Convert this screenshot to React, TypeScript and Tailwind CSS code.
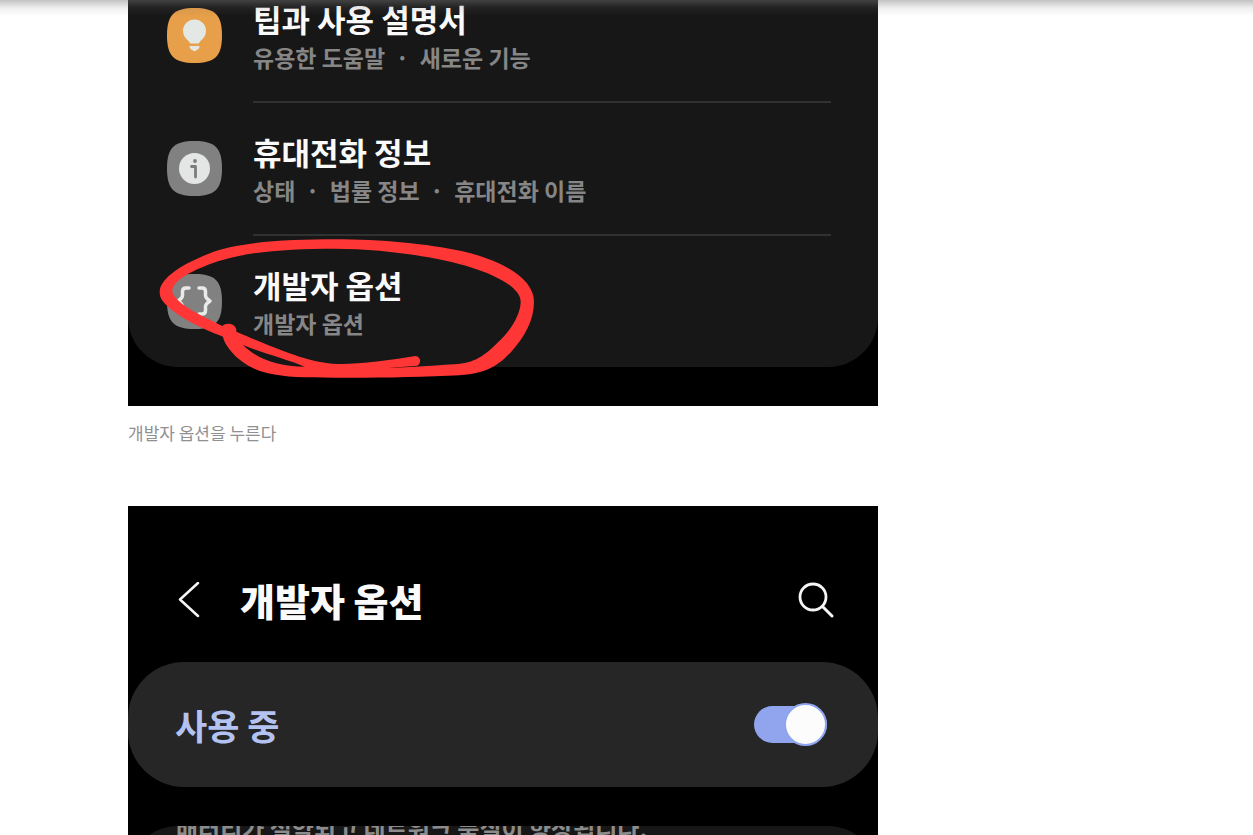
import { useState } from 'react';
import type { ReactNode } from 'react';

function IconTile({ color, children }: { color: string; children: ReactNode }) {
    return (
        <svg className="mt-[7px] size-[55px] shrink-0" viewBox="0 0 55 55" fill="none" aria-hidden="true">
            <path d="M27.5 0C48 0 55 7 55 27.5S48 55 27.5 55 0 48 0 27.5 7 0 27.5 0Z" fill={color} />
            {children}
        </svg>
    );
}

const menuItems = [
    {
        title: '팁과 사용 설명서',
        description: '유용한 도움말  ·  새로운 기능',
        icon: (
            <IconTile color="#e79f49">
                <path d="M27.5 11.5A11.5 11.5 0 0 0 16 23c0 4 2 7 5 9.500 1.500 1.200 1.500 3 3 3h7c1.500 0 1.500-1.800 3-3 3-2.500 5-5.500 5-9.500a11.500 11.500 0 0 0-11.500-11.500Z" fill="#e4e8e4" />
                <path d="M22.500 38h10c0 2-1 3.500-3 4-1 1.700-3 1.700-4 0-2-.5-3-2-3-4Z" fill="#e4e8e4" />
            </IconTile>
        ),
    },
    {
        title: '휴대전화 정보',
        description: '상태  ·  법률 정보  ·  휴대전화 이름',
        icon: (
            <IconTile color="#818181">
                <circle cx="27.5" cy="27.5" r="15.5" fill="#e4e6e5" />
                <circle cx="28" cy="20" r="1.900" fill="#7c7c7c" />
                <path d="M24.500 25.500h4V36" stroke="#7c7c7c" strokeWidth="2.800" strokeLinecap="round" strokeLinejoin="round" />
            </IconTile>
        ),
    },
    {
        title: '개발자 옵션',
        description: '개발자 옵션',
        icon: (
            <IconTile color="#818181">
                <path d="M22 14h-3c-2.500 0-3.500 1-3.500 3.500v4c0 2-1.500 3.500-4.500 5.500 3 2 4.500 3.500 4.500 5.500v4c0 2.500 1 3.500 3.500 3.500h3M32 14h3c2.500 0 3.500 1 3.500 3.500v4c0 2 1.500 3.500 4.500 5.500-3 2-4.500 3.500-4.500 5.500v4c0 2.500-1 3.500-3.500 3.500h-3" stroke="#e8ebe8" strokeWidth="3.500" strokeLinecap="round" strokeLinejoin="round" />
            </IconTile>
        ),
    },
];

function MarkerCircle() {
    return (
        <svg className="pointer-events-none absolute bottom-[26px] left-0 h-[150px] w-[420px]" viewBox="0 0 1260 450" aria-hidden="true">
            <path
                fill="#ff3636"
                fillRule="evenodd"
                d="M95 185C98 140 170 100 240 72C330 35 480 28 620 28C760 28 900 42 1000 63C1120 90 1218 145 1218 215C1218 270 1190 320 1150 365C1105 415 1060 437 960 437C850 442 740 443 620 443C530 443 470 442 420 430C340 412 290 350 285 320C220 296 150 260 115 225C100 210 95 200 95 185Z
                M133 185C131 150 200 118 270 94C360 65 480 56 620 56C760 56 900 78 990 101C1090 126 1178 170 1178 215C1178 255 1145 305 1110 337C1070 377 1040 400 980 403C900 408 840 412 780 414L868 407C880 400 880 380 862 378C790 390 700 402 640 402C560 402 480 372 325 305C328 280 295 275 283 288C230 260 145 225 133 185Z
                M345 345C400 368 480 388 530 410C450 410 385 385 345 345Z"
            />
        </svg>
    );
}

function SettingsMenu() {
    return (
        <div className="relative bg-black pb-[39px]">
            <ul className="rounded-b-[50px] bg-[#171717] pt-px pr-[47px] pl-[39px]">
                {menuItems.map((item) => (
                    <li key={item.title} className="group pt-[31px] first:pt-0">
                        <button type="button" className="flex w-full items-start gap-[31px] text-left">
                            {item.icon}
                            <span className="flex flex-1 flex-col border-b-2 border-[#303232] pb-6 group-last:border-b-0">
                                <span className="text-[31px] leading-9 font-bold text-[#fafafa]">{item.title}</span>
                                <span className="text-[23px] leading-10 font-bold whitespace-pre text-[#868686]">{item.description}</span>
                            </span>
                        </button>
                    </li>
                ))}
            </ul>
            <MarkerCircle />
        </div>
    );
}

function DeveloperOptions() {
    const [enabled, setEnabled] = useState(true);

    return (
        <div className="bg-black pt-16">
            <header className="flex h-[92px] items-start pt-2 pr-11 pl-[50px]">
                <button type="button" aria-label="뒤로" className="mt-1 flex h-9 w-[62px] items-center">
                    <svg className="h-9 w-6" viewBox="0 0 24 36" fill="none" aria-hidden="true">
                        <path d="M20 1 2 17.500 20 34" stroke="#f5f5f5" strokeWidth="2.500" strokeLinecap="round" strokeLinejoin="round" />
                    </svg>
                </button>
                <h2 className="flex-1 text-[38px] leading-11 font-black text-[#fafafa]">개발자 옵션</h2>
                <button type="button" aria-label="검색" className="mt-1">
                    <svg className="size-9" viewBox="0 0 36 36" fill="none" aria-hidden="true">
                        <circle cx="15" cy="15" r="13" stroke="#f5f5f5" strokeWidth="2.800" />
                        <path d="m25 25 9 9" stroke="#f5f5f5" strokeWidth="3" strokeLinecap="round" />
                    </svg>
                </button>
            </header>

            <label className="flex h-[125px] cursor-pointer items-center justify-between rounded-[56px] bg-[#262626] pr-[51px] pl-[47px]">
                <span className="text-[35px] leading-[48px] font-bold text-[#b3c2f0]">사용 중</span>
                <input
                    type="checkbox"
                    role="switch"
                    checked={enabled}
                    onChange={(e) => setEnabled(e.target.checked)}
                    className="relative h-[37px] w-[73px] cursor-pointer appearance-none rounded-full bg-[#555] before:absolute before:-top-[3px] before:left-0 before:size-[43px] before:rounded-full before:border-2 before:border-[#8fa4ee] before:bg-[#fcfcfc] checked:bg-[#91a5ee] checked:before:left-[30px]"
                />
            </label>

            <section className="mt-[39px] h-48 overflow-hidden rounded-t-[50px] bg-[#171717] px-12">
                <p className="-mt-4 text-2xl leading-9 font-bold text-[#8c8c8c]">배터리가 절약되고 네트워크 품질이 향상됩니다.</p>
            </section>
        </div>
    );
}

export default function App() {
    return (
        <div className="h-screen overflow-hidden bg-white font-['Noto_Sans_CJK_KR',sans-serif]">
            {/* Shadow of the bar above the article */}
            <div className="pointer-events-none fixed inset-x-0 top-0 z-10 h-4 bg-linear-to-b from-[#767676]/45 via-[#767676]/12 to-transparent" />

            <main className="mx-4 max-w-[750px] md:ml-32">
                <figure>
                    <SettingsMenu />
                    <figcaption className="pt-3.5 text-[17px] leading-[26px] text-[#909090]">개발자 옵션을 누른다</figcaption>
                </figure>
                <figure className="mt-[60px]">
                    <DeveloperOptions />
                </figure>
            </main>
        </div>
    );
}
